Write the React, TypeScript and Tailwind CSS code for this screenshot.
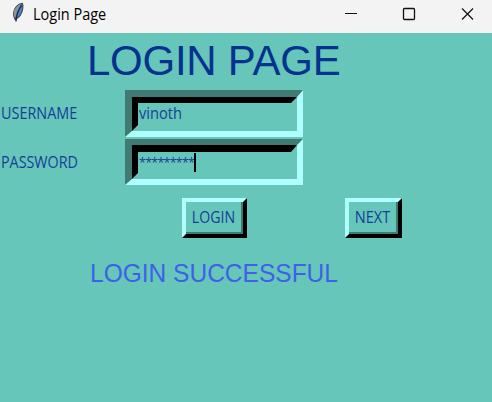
import React from "react";

function Feather() {
  return (
    <svg className="ml-[11px] mt-[2px] h-[21px] w-[14px] shrink-0" viewBox="0 0 14 22">
      <path d="M11.500 1.500C7 2 3 6 2.500 11c-.3 3 .2 5 1.400 7.200C8 16.500 11.300 12 12 6.500c.3-2 .2-4-.5-5z" fill="#4f86cf" stroke="#3f444b" strokeWidth="1.200" />
      <path d="M3.200 8.500C4.500 5.500 7 3 10 2L5.500 11 4 17C2.500 14 2.400 11 3.200 8.500z" fill="#8f9499" />
      <path d="M10.800 3.500C8 7 5.500 11 4.800 20.500" fill="none" stroke="#172b45" strokeWidth="1.500" />
    </svg>
  );
}

function Entry({ children, className, innerClassName }: { children: React.ReactNode; className: string; innerClassName: string }) {
  return (
    <div className={`ml-[125px] w-[178px] border-r-6 border-b-6 border-l-7 border-t-[#407a72] border-l-[#407a72] border-r-[#b0ffff] border-b-[#b0ffff] ${className}`}>
      <div className={`flex h-full items-start border-r-6 border-b-6 border-l-6 border-t-black border-l-black border-r-[#67c6ba] border-b-[#67c6ba] ${innerClassName}`}>
        {children}
      </div>
    </div>
  );
}

function RaisedButton({ children, className }: { children: React.ReactNode; className: string }) {
  return (
    <button className={`h-10 shrink-0 border-4 border-t-[#b0ffff] border-l-[#b0ffff] border-r-black border-b-black ${className}`}>
      <span className="flex h-full w-full items-center justify-center border-r-2 border-b-2 border-[#407a72]">
        {children}
      </span>
    </button>
  );
}

export default function App() {
  return (
    <div className="flex h-[402px] w-[492px] flex-col overflow-hidden bg-[#67c6ba] font-['Open_Sans','Noto_Sans',sans-serif] text-[16px] text-[#153f96]">
      <header className="flex h-[33px] shrink-0 items-start bg-[#f3f3f3] text-black">
        <Feather />
        <span className="ml-2 mt-[4px] w-[300px] origin-left scale-x-[0.935] whitespace-nowrap text-[15.500px] leading-5">Login Page</span>
        <svg className="ml-[10px] mt-[6px] h-4 w-[132px]" viewBox="0 0 132 16" fill="none" stroke="#111">
          <path d="M2 7.500H14" />
          <rect x="60.500" y="2.500" width="11" height="11" rx="1" strokeWidth="1.300" />
          <path d="M119 2.500L130 13.500M130 2.500L119 13.500" strokeWidth="1.200" />
        </svg>
      </header>
      <h1 className="ml-[87px] mt-[4px] h-[48px] shrink-0 whitespace-nowrap font-['Liberation_Sans',Arial,sans-serif] text-[42px] leading-[48px] tracking-[-0.25px] text-[#05318f]">LOGIN PAGE</h1>
      <div className="mt-[5px] grid h-[47px] shrink-0 grid-cols-1 grid-rows-1">
        <span className="col-start-1 row-start-1 ml-px mt-[13px] w-[90px] origin-left scale-x-[0.9] leading-5">USERNAME</span>
        <Entry className="col-start-1 row-start-1 h-[47px] border-t-7" innerClassName="border-t-6">
          <span className="ml-px origin-left scale-x-[0.915] leading-5">vinoth</span>
        </Entry>
      </div>
      <div className="mt-[2px] grid h-[46px] shrink-0 grid-cols-1 grid-rows-1">
        <span className="col-start-1 row-start-1 ml-px mt-[13px] w-[90px] origin-left scale-x-[0.895] leading-5">PASSWORD</span>
        <Entry className="col-start-1 row-start-1 h-[46px] border-t-6" innerClassName="border-t-7">
          <span className="ml-px mt-px w-[55px] shrink-0 whitespace-nowrap text-[12.500px] leading-5 tracking-[-0.750px]">*********</span>
          <i className="mt-px h-[19px] w-[2px] bg-black" />
        </Entry>
      </div>
      <div className="mt-[13px] flex shrink-0">
        <RaisedButton className="ml-[182px] w-[65px]"><span className="scale-x-[0.885]">LOGIN</span></RaisedButton>
        <RaisedButton className="ml-[98px] w-[57px]"><span className="scale-x-[0.91]">NEXT</span></RaisedButton>
      </div>
      <p className="ml-[90px] mt-[20px] origin-left scale-x-[0.943] whitespace-nowrap font-['Liberation_Sans',Arial,sans-serif] text-[26px] leading-[30px] text-[#3e61e8]">LOGIN SUCCESSFUL</p>
    </div>
  );
}
